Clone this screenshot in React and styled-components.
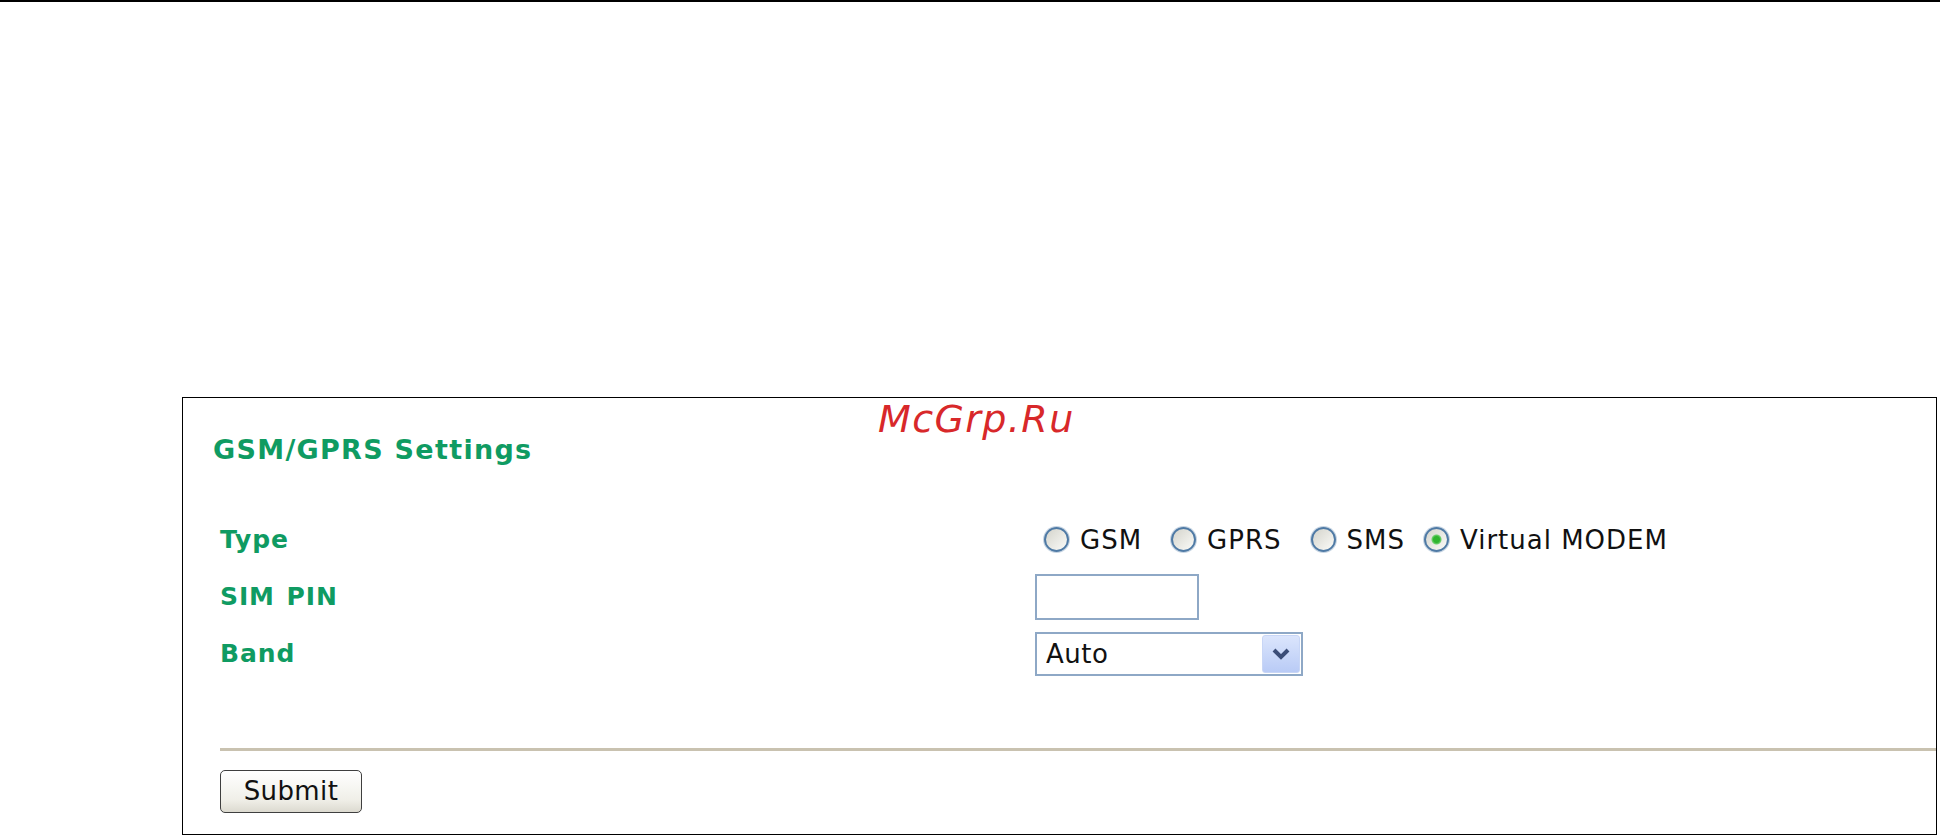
import React from 'react';
import styled, { createGlobalStyle } from 'styled-components';

const GlobalStyle = createGlobalStyle`
  html, body {
    margin: 0;
    padding: 0;
    background: #fff;
  }
  body {
    font-family: "DejaVu Sans", Verdana, sans-serif;
  }
`;

const Page = styled.div`
  width: 1940px;
  height: 835px;
  overflow: hidden;
`;

const TopRule = styled.div`
  width: 1940px;
  height: 2px;
  background: #000;
`;

const Panel = styled.section`
  position: relative;
  box-sizing: border-box;
  width: 1755px;
  height: 438px;
  margin: 395px 0 0 182px;
  border: 1px solid #000;
  padding: 36px 0 0 37px;
`;

const Watermark = styled.div`
  position: absolute;
  left: 695px;
  top: -1px;
  font-family: "DejaVu Sans", sans-serif;
  font-style: italic;
  font-size: 38px;
  line-height: 44px;
  color: #d8282a;
  letter-spacing: 1.4px;
`;

const Title = styled.h2`
  margin: 0 0 0 -7px;
  font-size: 27px;
  line-height: 32px;
  font-weight: bold;
  letter-spacing: 1.3px;
  color: #0f9b62;
`;

const Form = styled.div`
  margin-top: 45px;
  display: grid;
  grid-template-columns: 815px 1fr;
  grid-auto-rows: 57px;
`;

const Label = styled.div`
  display: flex;
  align-items: center;
  font-size: 25px;
  font-weight: bold;
  letter-spacing: 0.9px;
  word-spacing: 2px;
  color: #0f9b62;
`;

const Field = styled.div`
  display: flex;
  align-items: center;
`;

const RadioGroup = styled.div`
  display: flex;
  align-items: center;
  padding-left: 9px;
  gap: 29px;
`;

const RadioItem = styled.label`
  display: flex;
  align-items: center;
  gap: 11px;
  margin-left: ${(p) => (p.$tight ? '-10px' : '0')};
  font-size: 26px;
  letter-spacing: 1px;
  color: #111;
`;

const Radio = styled.input`
  appearance: none;
  margin: 0;
  width: 25px;
  height: 25px;
  box-sizing: border-box;
  border-radius: 50%;
  border: 2.5px solid #4f7aa5;
  box-shadow: 0 0 0 1px #c6d4e2;
  background: ${(p) =>
    p.checked
      ? 'radial-gradient(circle, #2fb52f 0 3px, #6fcf6f 4.5px, transparent 5.5px), linear-gradient(135deg, #d4d4cc, #fbfbf8)'
      : 'linear-gradient(135deg, #d4d4cc, #fbfbf8)'};
`;

const TextInput = styled.input`
  box-sizing: border-box;
  width: 164px;
  height: 46px;
  margin: 0;
  border: 2.5px solid #8ea8c6;
  padding: 0 8px;
  font-family: "DejaVu Sans", sans-serif;
  font-size: 26px;
  background: #fff;
  outline: none;
`;

const SelectBox = styled.div`
  box-sizing: border-box;
  width: 268px;
  height: 44px;
  margin-top: 1px;
  display: flex;
  align-items: stretch;
  border: 2.5px solid #8ea8c6;
  padding: 1px;
  background: #fff;
`;

const Select = styled.select`
  appearance: none;
  flex: 1;
  border: none;
  outline: none;
  background: transparent;
  padding: 0 0 0 8px;
  font-family: "DejaVu Sans", sans-serif;
  font-size: 26px;
  letter-spacing: 0.5px;
  color: #111;
`;

const ArrowButton = styled.span`
  width: 36px;
  display: flex;
  align-items: center;
  justify-content: center;
  border-radius: 3px;
  border: 1px solid #c8d6f6;
  background: linear-gradient(180deg, #dbe5fc, #b9cbf6);
`;

const Divider = styled.div`
  margin-top: 66px;
  height: 2.5px;
  background: #c9c2b0;
`;

const SubmitButton = styled.button`
  margin-top: 19px;
  box-sizing: border-box;
  width: 142px;
  height: 43px;
  border: 1px solid #3f3f3f;
  border-radius: 5px;
  background: linear-gradient(180deg, #ffffff, #f0efe8 70%, #dcdad0);
  font-family: "DejaVu Sans", sans-serif;
  font-size: 26px;
  letter-spacing: 0.4px;
  color: #111;
  padding: 0;
`;

const types = ['GSM', 'GPRS', 'SMS', 'Virtual MODEM'];

const App = () => {
  return (
    <>
      <GlobalStyle />
      <Page>
        <TopRule />
        <Panel>
          <Watermark>McGrp.Ru</Watermark>
          <Title>GSM/GPRS Settings</Title>
          <Form>
            <Label>Type</Label>
            <Field>
              <RadioGroup>
                {types.map((t) => (
                  <RadioItem key={t} $tight={t === 'Virtual MODEM'}>
                    <Radio
                      type="radio"
                      name="type"
                      checked={t === 'Virtual MODEM'}
                      readOnly
                    />
                    {t}
                  </RadioItem>
                ))}
              </RadioGroup>
            </Field>
            <Label>SIM PIN</Label>
            <Field>
              <TextInput type="text" />
            </Field>
            <Label>Band</Label>
            <Field>
              <SelectBox>
                <Select defaultValue="auto">
                  <option value="auto">Auto</option>
                </Select>
                <ArrowButton>
                  <svg width="20" height="14" viewBox="0 0 20 14">
                    <path d="M3 3 L10 10 L17 3" fill="none" stroke="#3b4d78" strokeWidth="4" />
                  </svg>
                </ArrowButton>
              </SelectBox>
            </Field>
          </Form>
          <Divider />
          <SubmitButton>Submit</SubmitButton>
        </Panel>
      </Page>
    </>
  );
};

export default App;
